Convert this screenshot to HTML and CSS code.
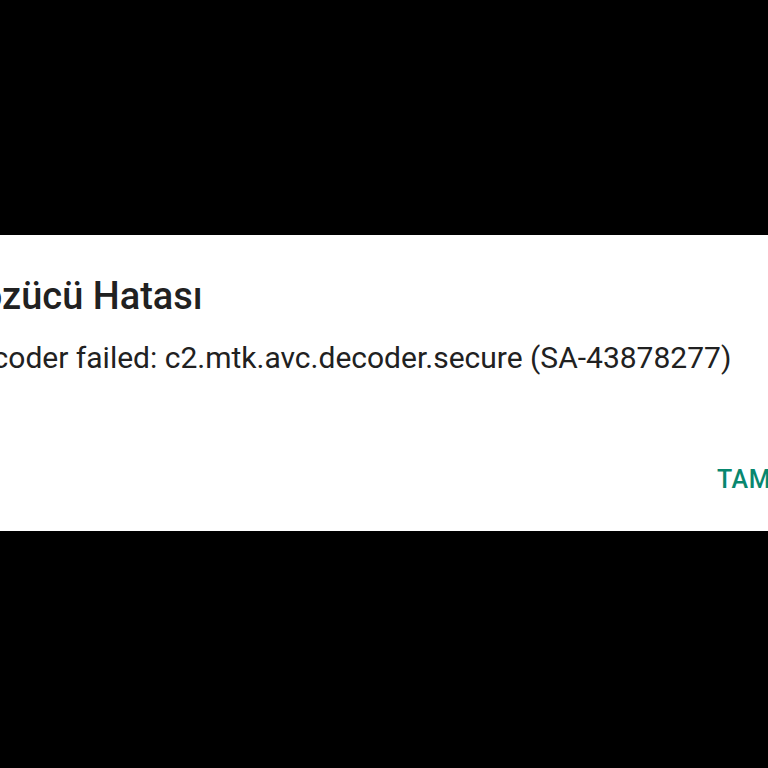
FILE: index.html
```html
<!DOCTYPE html>
<html lang="tr">
<head>
<meta charset="utf-8">
<link rel="stylesheet" href="styles.css">
</head>
<body>
<div class="dialog">
  <div class="content">
    <h1 class="title">Çözücü Hatası</h1>
    <p class="message">Decoder failed: c2.mtk.avc.decoder.secure (SA-43878277)</p>
  </div>
  <div class="actions">
    <span class="button">TAMAM</span>
  </div>
</div>
</body>
</html>
```
FILE: styles.css
```css
html, body {
  margin: 0;
  padding: 0;
  background: #000;
  width: 768px;
  height: 768px;
  overflow: hidden;
}
.dialog {
  margin-top: 235px;
  height: 296px;
  background: #fff;
  display: flex;
  flex-direction: column;
  font-family: Roboto, "Noto Sans", sans-serif;
}
.content {
  margin-left: -43px;
  white-space: nowrap;
}
.title {
  margin: 0 0 0 -1px;
  padding-top: 40px;
  font-size: 38px;
  font-weight: 500;
  line-height: 42px;
  color: #212121;
}
.message {
  margin: 0;
  padding-top: 21px;
  font-size: 30px;
  line-height: 40px;
  color: #212121;
}
.actions {
  margin-top: auto;
  padding-bottom: 37px;
  padding-left: 717px;
  white-space: nowrap;
}
.button {
  font-size: 25px;
  font-weight: 500;
  color: #08876f;
  letter-spacing: 0.5px;
}
```
